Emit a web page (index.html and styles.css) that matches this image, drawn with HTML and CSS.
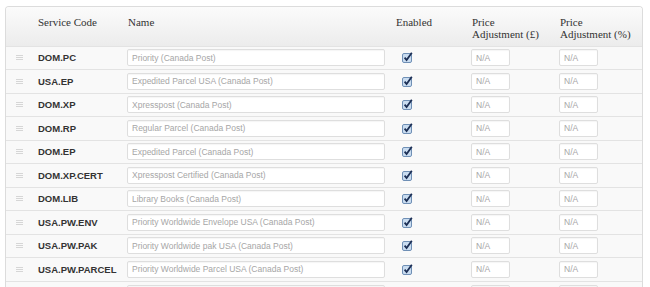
FILE: index.html
```html
<!DOCTYPE html>
<html lang="en">
<head>
    <meta charset="UTF-8">
    <meta name="viewport" content="width=device-width, initial-scale=1.0">
    <title>Services</title>
    <link rel="stylesheet" href="styles.css">
</head>
<body>

<div class="services">
<table class="service-table">
    <colgroup>
        <col class="col-handle">
        <col class="col-code">
        <col class="col-name">
        <col class="col-enabled">
        <col class="col-price">
        <col class="col-pct">
    </colgroup>
    <thead>
        <tr>
            <th></th>
            <th>Service Code</th>
            <th>Name</th>
            <th>Enabled</th>
            <th>Price<br>Adjustment (£)</th>
            <th>Price<br>Adjustment (%)</th>
        </tr>
    </thead>
    <tbody id="rows"></tbody>
</table>
</div>

<script>
    var services = [
        ['DOM.PC', 'Priority (Canada Post)'],
        ['USA.EP', 'Expedited Parcel USA (Canada Post)'],
        ['DOM.XP', 'Xpresspost (Canada Post)'],
        ['DOM.RP', 'Regular Parcel (Canada Post)'],
        ['DOM.EP', 'Expedited Parcel (Canada Post)'],
        ['DOM.XP.CERT', 'Xpresspost Certified (Canada Post)'],
        ['DOM.LIB', 'Library Books (Canada Post)'],
        ['USA.PW.ENV', 'Priority Worldwide Envelope USA (Canada Post)'],
        ['USA.PW.PAK', 'Priority Worldwide pak USA (Canada Post)'],
        ['USA.PW.PARCEL', 'Priority Worldwide Parcel USA (Canada Post)'],
        ['', '']
    ];

    var check = '<svg class="check" width="11" height="11" viewBox="0 0 11 11">' +
        '<rect x="0.5" y="1.5" width="9" height="9" rx="1.5" fill="#c9dcf0" stroke="#6f8fb5"/>' +
        '<path d="M2.6 5.6 L4.6 8 L9.8 0.8" fill="none" stroke="#1c2f55" stroke-width="1.8"/>' +
        '</svg>';

    var handle = '<span class="handle"><i></i><i></i><i></i></span>';

    var html = '';
    services.forEach(function(s) {
        html += '<tr>' +
            '<td>' + handle + '</td>' +
            '<td class="code">' + s[0] + '</td>' +
            '<td><input class="name-input" type="text" placeholder="' + s[1] + '"></td>' +
            '<td>' + check + '</td>' +
            '<td><input class="price-input" type="text" placeholder="N/A"></td>' +
            '<td><input class="price-input" type="text" placeholder="N/A"></td>' +
            '</tr>';
    });
    document.getElementById('rows').innerHTML = html;
</script>

</body>
</html>
```

FILE: styles.css
```css
body {
    margin: 0;
    padding: 6px 7px 0 5px;
    background: #fff;
    font-family: "Liberation Sans", Arial, sans-serif;
}
.services {
    border: 1px solid #dcdcdc;
    border-bottom: none;
    border-radius: 4px 4px 0 0;
    overflow: hidden;
}
.service-table {
    width: 100%;
    border-collapse: collapse;
    table-layout: fixed;
}
.col-handle { width: 24px; }
.col-code { width: 90px; }
.col-name { width: 268px; }
.col-enabled { width: 76px; }
.col-price { width: 88px; }
.col-pct { width: auto; }

.service-table th {
    height: 39px;
    padding: 9px 8px 0;
    vertical-align: top;
    text-align: left;
    font-family: "Liberation Serif", "Times New Roman", serif;
    font-weight: normal;
    font-size: 11px;
    line-height: 12px;
    color: #333;
    white-space: nowrap;
    background: linear-gradient(#fbfbfb, #ececec);
    box-sizing: border-box;
}
.service-table td {
    height: 23.5px;
    padding: 0 8px;
    box-sizing: border-box;
    border-top: 1px solid #e3e3e3;
    background: #f9f9f9;
    vertical-align: middle;
}
.service-table td:first-child {
    padding: 0 0 0 10px;
}
.code {
    font-size: 9.5px;
    font-weight: bold;
    color: #333;
}
.handle {
    display: block;
    width: 7px;
}
.handle i {
    display: block;
    height: 1px;
    margin: 1px 0;
    background: #d6d6d6;
}
input {
    display: block;
    height: 17px;
    margin: 0 0 0 -1px;
    padding: 0 4px;
    box-sizing: border-box;
    border: 1px solid #dedede;
    border-radius: 2px;
    background: #fff;
    box-shadow: inset 0 1px 1px rgba(0, 0, 0, 0.04);
    font-family: "Liberation Sans", Arial, sans-serif;
    font-size: 8.5px;
}
input::placeholder {
    color: #a6a6a6;
}
.name-input {
    width: 258px;
}
.price-input {
    width: 39px;
}
.check {
    display: block;
    margin-left: 6px;
}
```
